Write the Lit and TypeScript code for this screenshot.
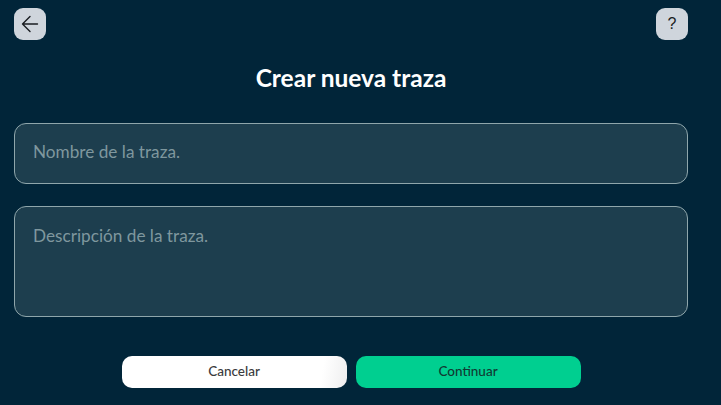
import { LitElement, html, css } from "lit";
import { customElement } from "lit/decorators.js";

@customElement("app-root")
export class AppRoot extends LitElement {
  static styles = css`
    :host {
      display: flex;
      flex-direction: column;
      box-sizing: border-box;
      width: 721px;
      height: 405px;
      padding: 8px 33px 17px 14px;
      background: #012539;
      font-family: Lato, "Open Sans", sans-serif;
      overflow: hidden;
    }
    .top {
      display: flex;
      justify-content: space-between;
    }
    .icon-btn {
      width: 32px;
      height: 32px;
      padding: 0;
      border: 0;
      border-radius: 9px;
      background: #cfd5dc;
      color: #1a1d21;
      display: flex;
      align-items: center;
      justify-content: center;
      font: 400 16px "Liberation Sans", sans-serif;
    }
    h1 {
      margin: 21px 0 28px;
      height: 34px;
      line-height: 33px;
      text-align: center;
      color: #fff;
      font-size: 24.5px;
      font-weight: 700;
    }
    .field {
      box-sizing: border-box;
      border: 1px solid #8fa6ab;
      border-radius: 12px;
      background: #1d3e4e;
      color: #7f979e;
      font-size: 17.2px;
      padding: 0 18px;
    }
    .name {
      height: 61px;
      line-height: 56px;
      margin-bottom: 22px;
    }
    .desc {
      height: 111px;
      line-height: 58px;
    }
    .actions {
      margin-top: auto;
      display: flex;
      justify-content: center;
      gap: 9px;
    }
    .actions button {
      width: 225px;
      height: 32px;
      padding: 0 0 2px;
      border: 0;
      border-radius: 10px;
      font-family: inherit;
      font-size: 13.5px;
      font-weight: 500;
      color: #3a3b3d;
    }
    .cancel {
      background: linear-gradient(100deg, #fff 88%, #eeeeef 100%);
    }
    .actions .go {
      background: #00cf90;
      color: #113a33;
    }
  `;

  render() {
    return html`
      <div class="top">
        <button class="icon-btn" aria-label="Volver">
          <svg width="20" height="20" viewBox="0 0 20 20" fill="none" stroke="#1a1d21" stroke-width="1.4" stroke-linecap="round" stroke-linejoin="round">
            <path d="M17.5 10H2.5M10 2.5 2.5 10l7.5 7.5" />
          </svg>
        </button>
        <button class="icon-btn">?</button>
      </div>
      <h1>Crear nueva traza</h1>
      <div class="field name">Nombre de la traza.</div>
      <div class="field desc">Descripción de la traza.</div>
      <div class="actions">
        <button class="cancel">Cancelar</button>
        <button class="go">Continuar</button>
      </div>
    `;
  }
}
